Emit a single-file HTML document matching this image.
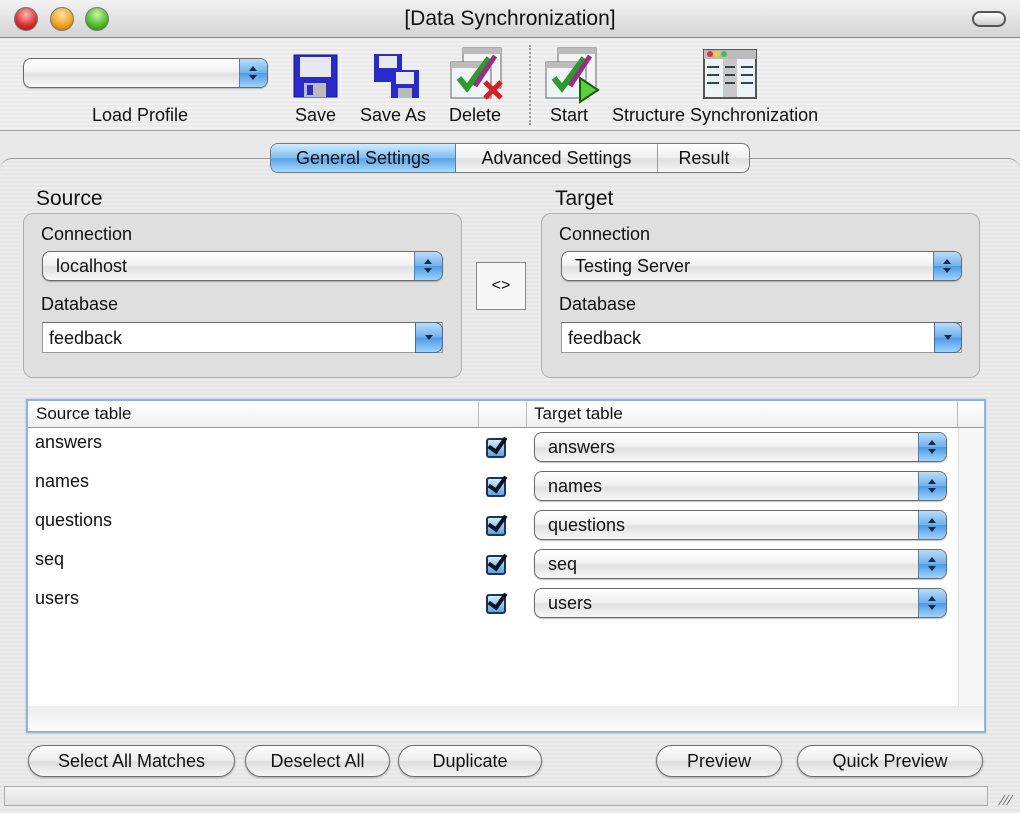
<!DOCTYPE html>
<html><head><meta charset="utf-8">
<style>
*{box-sizing:border-box;margin:0;padding:0}
body{width:1020px;height:813px;overflow:hidden;background:#e9e9e9;font-family:"Liberation Sans","DejaVu Sans",sans-serif;color:#111;position:relative;font-size:18px}
.a{position:absolute}
.title{left:0;top:0;width:1020px;height:38px;background:linear-gradient(#f2f2f2,#d4d4d4);border-bottom:1px solid #8a8a8a;text-align:center;font-size:21px;line-height:38px}
.tl{top:7px;width:24px;height:24px;border-radius:50%;border:1px solid #777}
.toolbar{left:0;top:39px;width:1020px;height:92px;background:repeating-linear-gradient(#f1f1f1 0 2px,#e9e9e9 2px 4px);border-bottom:1px solid #a0a0a0}
.lbl{font-size:18px;top:105px}
.pop{height:30px;border:1px solid #6b6b6b;border-radius:8px;background:linear-gradient(#fff,#f2f2f2 45%,#e0e0e0 55%,#f8f8f8);box-shadow:0 1px 1px rgba(0,0,0,.25);overflow:hidden;font-size:18px;line-height:28px;padding-left:13px}
.pop .cap{position:absolute;right:0;top:0;bottom:0;width:28px;background:linear-gradient(#b9dcf9,#6fb0ee 50%,#4c9ae6 51%,#9fd3fb);border-left:1px solid #5581b0}
.cap:before{content:"";position:absolute;left:9px;top:7px;border:4px solid transparent;border-bottom:5px solid #1a2a44;border-top:0}
.cap:after{content:"";position:absolute;left:9px;top:16px;border:4px solid transparent;border-top:5px solid #1a2a44;border-bottom:0}
.combo{height:31px;background:#fff;border:1px solid #9a9a9a;border-top-color:#6c6c6c;font-size:18px;line-height:30px;padding-left:6px}
.combo .cap2{position:absolute;right:-1px;top:-1px;width:28px;height:31px;border:1px solid #4d6c90;border-radius:0 8px 8px 0;background:linear-gradient(#b9dcf9,#6fb0ee 50%,#4c9ae6 51%,#9fd3fb)}
.cap2:after{content:"";position:absolute;left:9px;top:12px;border:4px solid transparent;border-top:5px solid #1a2a44;border-bottom:0}
.grp{border:1px solid #b0b0b0;border-radius:10px;background:#dfdfdf}
.btn{top:745px;height:32px;border:1px solid #6d6d6d;border-radius:16px;background:linear-gradient(#fdfdfd,#ececec 50%,#dcdcdc 52%,#f7f7f7);text-align:center;font-size:18px;line-height:30px;box-shadow:0 1px 2px rgba(0,0,0,.3)}
.chk{width:20px;height:20px;border:2px solid #1d3557;border-radius:3px;background:linear-gradient(#d5ebfd,#5aa3e8);left:486px}
.chk:after{content:"";position:absolute;left:4px;top:-6px;width:7px;height:15px;border:solid #0b1220;border-width:0 4px 4px 0;transform:rotate(35deg)}
.row{left:35px;font-size:18px}
</style></head><body>
<div class="a title">[Data Synchronization]</div>
<div class="a tl" style="left:14px;background:radial-gradient(circle at 50% 30%,#ffb3b3,#d62c2c 60%,#8d1111)"></div>
<div class="a tl" style="left:50px;background:radial-gradient(circle at 50% 30%,#ffe2a0,#f0a020 60%,#a3620a)"></div>
<div class="a tl" style="left:85px;background:radial-gradient(circle at 50% 30%,#c9f7a6,#4dba2a 60%,#1e6e0f)"></div>
<div class="a" style="left:972px;top:11px;width:34px;height:16px;border:2px solid #555;border-radius:8px;background:linear-gradient(#fff,#ccc)"></div>

<div class="a toolbar"></div>
<div class="a pop" style="left:23px;top:58px;width:245px"><span class="cap"></span></div>
<div class="a lbl" style="left:92px">Load Profile</div>
<svg class="a" style="left:293px;top:53px" width="46" height="46" viewBox="0 0 46 46">
<rect x="1" y="2" width="43" height="42" fill="#2a2ac8" stroke="#14147a"/><rect x="7" y="4" width="31" height="20" fill="#e8e8f0"/><rect x="11" y="30" width="22" height="14" fill="#bbb"/><rect x="14" y="32" width="6" height="10" fill="#2a2ac8"/></svg>
<div class="a lbl" style="left:295px">Save</div>
<svg class="a" style="left:373px;top:52px" width="48" height="48" viewBox="0 0 48 48">
<rect x="1" y="2" width="28" height="28" fill="#2a2ac8"/><rect x="6" y="4" width="18" height="12" fill="#e8e8f0"/>
<rect x="18" y="18" width="28" height="28" fill="#2a2ac8"/><rect x="23" y="20" width="18" height="12" fill="#e8e8f0"/><rect x="25" y="36" width="14" height="10" fill="#bbb"/></svg>
<div class="a lbl" style="left:360px">Save As</div>
<svg class="a" style="left:449px;top:46px" width="58" height="58" viewBox="0 0 58 58">
<rect x="14" y="2" width="38" height="40" fill="#f4f4f4" stroke="#666"/><rect x="14" y="2" width="38" height="6" fill="#bbb"/>
<rect x="2" y="16" width="40" height="36" fill="#eef4f8" stroke="#666"/><rect x="2" y="16" width="40" height="6" fill="#bbb"/>
<path d="M10 32l8 10 22-30" stroke="#2c9a2c" stroke-width="6" fill="none"/><path d="M26 40l20-30" stroke="#9a2c8a" stroke-width="5"/>
<path d="M36 36l16 16M52 36l-16 16" stroke="#d42020" stroke-width="5"/></svg>
<div class="a lbl" style="left:449px">Delete</div>
<div class="a" style="left:529px;top:45px;height:80px;border-left:2px dotted #999"></div>
<svg class="a" style="left:544px;top:46px" width="58" height="58" viewBox="0 0 58 58">
<rect x="14" y="2" width="38" height="40" fill="#f4f4f4" stroke="#666"/><rect x="14" y="2" width="38" height="6" fill="#bbb"/>
<rect x="2" y="16" width="40" height="36" fill="#eef4f8" stroke="#666"/><rect x="2" y="16" width="40" height="6" fill="#bbb"/>
<path d="M10 32l8 10 22-30" stroke="#2c9a2c" stroke-width="6" fill="none"/><path d="M26 40l20-30" stroke="#9a2c8a" stroke-width="5"/>
<path d="M36 32l18 12-18 12z" fill="#5cd03a" stroke="#1d5c12" stroke-width="2"/></svg>
<div class="a lbl" style="left:550px">Start</div>
<svg class="a" style="left:703px;top:49px" width="54" height="50" viewBox="0 0 54 50">
<rect x="1" y="1" width="52" height="48" fill="#eef3f6" stroke="#555" stroke-width="2"/><rect x="1" y="1" width="52" height="9" fill="#bbb"/>
<circle cx="7" cy="5" r="3" fill="#d33"/><circle cx="14" cy="5" r="3" fill="#ec3"/><circle cx="21" cy="5" r="3" fill="#4b4"/>
<rect x="20" y="10" width="14" height="38" fill="#c8c8c8"/><path d="M4 18h12M4 26h12M4 34h12M22 18h10M22 26h10M22 34h10M38 18h12M38 26h12M38 34h12" stroke="#345" stroke-width="2"/></svg>
<div class="a lbl" style="left:612px">Structure Synchronization</div>

<div class="a" style="left:0;top:158px;width:1020px;height:655px;border-top:1px solid #999;border-radius:12px 12px 0 0;background:repeating-linear-gradient(#ececec 0 2px,#e5e5e5 2px 4px)"></div>
<div class="a" style="left:270px;top:143px;width:480px;height:30px;border:1px solid #777;border-radius:8px;background:linear-gradient(#fff,#eee 50%,#ddd 52%,#f7f7f7);overflow:hidden;font-size:18px;line-height:28px">
<div class="a" style="left:0;top:0;width:185px;height:28px;background:linear-gradient(#d2ecff,#7dbcf0 50%,#58a3e8 52%,#a6dbfd);text-align:center;border-right:1px solid #5a7ea8">General Settings</div>
<div class="a" style="left:185px;top:0;width:202px;height:28px;text-align:center;border-right:1px solid #999">Advanced Settings</div>
<div class="a" style="left:387px;top:0;width:92px;height:28px;text-align:center">Result</div></div>

<div class="a" style="left:36px;top:187px;font-size:21px">Source</div>
<div class="a grp" style="left:23px;top:213px;width:439px;height:165px"></div>
<div class="a" style="left:41px;top:224px">Connection</div>
<div class="a pop" style="left:42px;top:251px;width:401px">localhost<span class="cap"></span></div>
<div class="a" style="left:41px;top:294px">Database</div>
<div class="a combo" style="left:42px;top:322px;width:401px">feedback<span class="cap2"></span></div>

<div class="a" style="left:476px;top:262px;width:50px;height:48px;border:1px solid #888;background:#f7f7f7;text-align:center;line-height:46px;font-size:16px">&lt;&gt;</div>

<div class="a" style="left:555px;top:187px;font-size:21px">Target</div>
<div class="a grp" style="left:541px;top:213px;width:439px;height:165px"></div>
<div class="a" style="left:559px;top:224px">Connection</div>
<div class="a pop" style="left:561px;top:251px;width:401px">Testing Server<span class="cap"></span></div>
<div class="a" style="left:559px;top:294px">Database</div>
<div class="a combo" style="left:561px;top:322px;width:401px">feedback<span class="cap2"></span></div>

<div class="a" style="left:26px;top:399px;width:960px;height:334px;border:2px solid #8fb4d8;background:#fff;box-shadow:0 0 2px #9ec0e4"></div>
<div class="a" style="left:958px;top:428px;width:26px;height:278px;background:#f7f7f7;border-left:1px solid #e0e0e0"></div>
<div class="a" style="left:28px;top:706px;width:956px;height:25px;background:linear-gradient(#ececec,#fcfcfc)"></div>
<div class="a" style="left:28px;top:401px;width:956px;height:27px;background:linear-gradient(#fff,#f0f0f0);border-bottom:1px solid #999;font-size:17px;line-height:25px">
<span class="a" style="left:8px">Source table</span>
<span class="a" style="left:450px;height:26px;border-left:1px solid #bbb"></span>
<span class="a" style="left:498px;height:26px;border-left:1px solid #bbb"></span>
<span class="a" style="left:506px">Target table</span>
<span class="a" style="left:929px;height:26px;border-left:1px solid #bbb"></span></div>

<div class="a row" style="top:432px">answers</div>
<div class="a row" style="top:471px">names</div>
<div class="a row" style="top:510px">questions</div>
<div class="a row" style="top:549px">seq</div>
<div class="a row" style="top:588px">users</div>
<div class="a chk" style="top:438px"></div>
<div class="a chk" style="top:477px"></div>
<div class="a chk" style="top:516px"></div>
<div class="a chk" style="top:555px"></div>
<div class="a chk" style="top:594px"></div>
<div class="a pop" style="left:534px;top:432px;width:413px">answers<span class="cap"></span></div>
<div class="a pop" style="left:534px;top:471px;width:413px">names<span class="cap"></span></div>
<div class="a pop" style="left:534px;top:510px;width:413px">questions<span class="cap"></span></div>
<div class="a pop" style="left:534px;top:549px;width:413px">seq<span class="cap"></span></div>
<div class="a pop" style="left:534px;top:588px;width:413px">users<span class="cap"></span></div>

<div class="a btn" style="left:28px;width:207px">Select All Matches</div>
<div class="a btn" style="left:245px;width:145px">Deselect All</div>
<div class="a btn" style="left:398px;width:144px">Duplicate</div>
<div class="a btn" style="left:656px;width:126px">Preview</div>
<div class="a btn" style="left:797px;width:186px">Quick Preview</div>

<div class="a" style="left:4px;top:786px;width:984px;height:20px;border:1px solid #aaa;background:linear-gradient(#f4f4f4,#e0e0e0)"></div>
<div class="a" style="left:1000px;top:792px;font-size:14px;color:#777;transform:skewX(-20deg)">///</div>
</body></html>
